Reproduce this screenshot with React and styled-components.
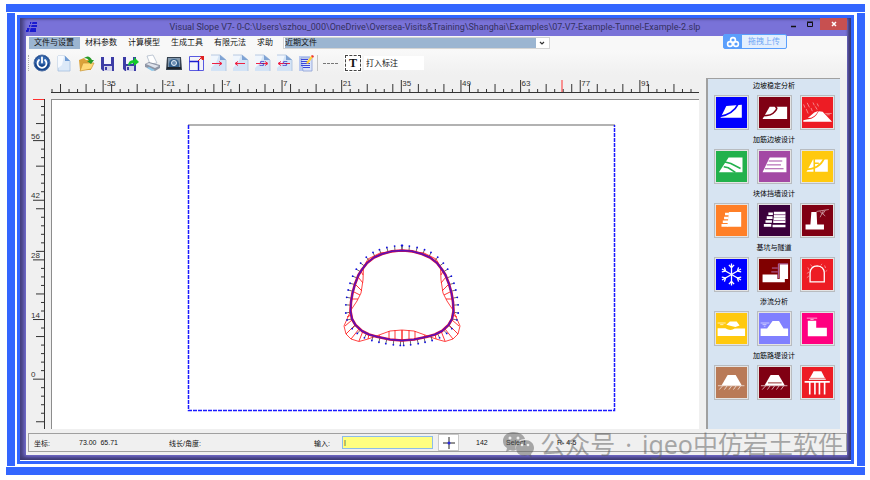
import React from "react";
import styled, { createGlobalStyle } from "styled-components";

const GlobalStyle = createGlobalStyle`
  * {
    box-sizing: border-box;
  }

  body {
    margin: 0;
    background: #fff;
    font-family: "Liberation Sans", "Noto Sans CJK SC", sans-serif;
    font-size: 8px;
    color: #111;
  }

  button, input, select {
    font: inherit;
    color: inherit;
    padding: 0;
    margin: 0;
    border: 0;
    background: none;
  }

  svg {
    display: block;
  }
`;

const menus = ["文件与设置", "材料参数", "计算模型", "生成工具", "有限元法", "求助"];

const Sheet = ({ children }) => (
  <>
    <path d="M2 1h9l6 5v11H2z" fill="#d3e3f6" />
    <path d="M2 1h8l-3 8-5 5z" fill="#f0f6fd" />
    <path d="M2 1h9l6 5v11" fill="none" stroke="#a9bfdc" strokeWidth=".8" />
    <path d="M11 1v5h6z" fill="#7fa3d4" />
    {children}
  </>
);

const Disk = () => (
  <>
    <path d="M2 3h13v14H4l-2-2z" fill="#3c3ca6" />
    <path d="M5 3h7v7H5z" fill="#f4f4fc" />
    <path d="M5 12h8v5H5z" fill="#d4d4ea" />
    <path d="M6 13h2v3H6z" fill="#3c3ca6" />
  </>
);

const tools = [
  {
    label: "退出",
    icon: (
      <>
        <circle cx="9" cy="9" r="8" fill="#16458c" stroke="#4d6fa5" />
        <path d="M2 9a7 7 0 0 1 14 0q-7 3-14 0" fill="#4c80c6" opacity=".6" />
        <path d="M6 6a4.500 4.500 0 1 0 6 0M9 3.500v5" fill="none" stroke="#fff" strokeWidth="1.800" strokeLinecap="round" />
      </>
    ),
  },
  {
    label: "新建",
    icon: (
      <>
        <path d="M3 2h7l5 5v10H3z" fill="#dce9f8" stroke="#a5bfe0" strokeWidth=".8" />
        <path d="M3 2h6l-2 9-4 3z" fill="#f6faff" />
        <path d="M10 2v5h5z" fill="#6f9bd4" />
      </>
    ),
  },
  {
    label: "打开",
    icon: (
      <>
        <path d="M2 6l5-2 2 2h5v10H3z" fill="#dba23a" />
        <path d="M3 17l3-8h11l-3 6z" fill="#ffd978" stroke="#c99431" strokeWidth=".7" />
        <path d="M7 4q5-4 8 2h2l-3 4-4-3h2q-1-3-5-3" fill="#279a27" />
      </>
    ),
  },
  { label: "保存", icon: <Disk /> },
  {
    label: "另存为",
    icon: (
      <>
        <Disk />
        <path d="M7 12q0-6 6-6V3l5 5-5 4V9q-3 0-6 3" fill="#12c92a" />
      </>
    ),
  },
  {
    label: "打印",
    icon: (
      <>
        <path d="M4 2l6-1 4 8-7 1z" fill="#fff" stroke="#a5b2c4" strokeWidth=".7" />
        <path d="M2 10l4-2 11 3v3l-5 3-10-4z" fill="#8e95a5" />
        <path d="M3 10l3-1 10 3-4 2z" fill="#dfe3ec" />
        <path d="M6 13l6 3-3 1-5-3z" fill="#8cc7ea" />
      </>
    ),
  },
  {
    label: "截图",
    icon: (
      <>
        <path d="M2 3h14l1 13H1z" fill="#36424f" />
        <path d="M3 4h12v9H3z" fill="#8298ae" />
        <path d="M4 13q-1-8 5-8t5 8z" fill="#35618d" />
        <circle cx="9" cy="9" r="2.500" fill="#6d8fb4" stroke="#e4eef8" />
        <path d="M2 14h14" stroke="#1d242c" strokeWidth="2" />
      </>
    ),
  },
  {
    label: "缩放",
    icon: (
      <>
        <path d="M2.500 2.500h14v14h-14z" fill="#f4f4f8" stroke="#5a5ae0" />
        <path d="M2.500 7.500h9v9" fill="none" stroke="#1c1cd0" strokeWidth="1.400" />
        <path d="M11 7l4-4" stroke="#e02020" />
        <path d="M13 2h4v4h-2z" fill="#e02020" />
      </>
    ),
  },
  { label: "导入", icon: <Sheet><path d="M3 9.500h10M10 7.500l3 2-3 2" fill="none" stroke="#ee2244" /></Sheet> },
  { label: "导出", icon: <Sheet><path d="M14 9.500H4M7 7.500l-3 2 3 2" fill="none" stroke="#ee2244" /></Sheet> },
  {
    label: "导入S",
    icon: (
      <Sheet>
        <path d="M3 9.500h11M12 7.500l3 2-3 2" fill="none" stroke="#ee2244" />
        <text x="6" y="12" fontSize="8" fontStyle="italic" fill="#2424c8">S</text>
      </Sheet>
    ),
  },
  {
    label: "导出S",
    icon: (
      <Sheet>
        <path d="M15 9.500H3M6 7.500l-3 2 3 2" fill="none" stroke="#ee2244" />
        <text x="7" y="12" fontSize="8" fontStyle="italic" fill="#2424c8">S</text>
      </Sheet>
    ),
  },
  {
    label: "报告",
    icon: (
      <>
        <path d="M2 2h11v15H2z" fill="#b9c9f0" />
        <path d="M4 4h11v13H6z" fill="#dbe5fa" stroke="#8b9fd6" strokeWidth=".8" />
        <path d="M4 5.500h7M4 7.500h7M4 9.500h9M4 11.500h9M6 13.500h7" stroke="#3a48dc" />
        <path d="M9 9l5-7 2 1-5 7z" fill="#ffcf3c" />
        <path d="M14 2l1-1 2 1-1 2z" fill="#e33" />
      </>
    ),
  },
];

const Slope = "M14 64 32 28 80 24V64z";

// every module icon is drawn on a 96 unit square
const groups = [
  {
    title: "边坡稳定分析",
    items: [
      {
        color: "#0000ff",
        icon: (
          <>
            <path d={Slope} fill="#fff" />
            <path d="M8 61Q52 56 70 20" fill="none" stroke="#0000ff" strokeWidth="5" />
          </>
        ),
      },
      {
        color: "#800013",
        icon: (
          <>
            <path d="M11 68 33 30H87V68z" fill="#fff" />
            <path d="M10 58Q40 58 48 46 55 40 55 35L50 27" fill="none" stroke="#800013" strokeWidth="5" />
          </>
        ),
      },
      {
        color: "#ed1c24",
        icon: (
          <>
            <path d="M4 77V72L18 69Q38 70 52 44L64 46 93 77zM18 65 38 48 50 43Q40 65 18 65" fill="#fff" />
            <path d="M5 23l4 10M13 37l6 14M16 18l7 14M28 34l4 10M34 17l4 9M41 29l6 10M47 20l4 9M72 51h20M76 55h10" stroke="#fff" strokeWidth="2" opacity=".7" />
          </>
        ),
      },
    ],
  },
  {
    title: "加筋边坡设计",
    items: [
      {
        color: "#22b14c",
        icon: (
          <>
            <path d="M9 66 39 20H82V66z" fill="#fff" />
            <path d="M28 34 46 39 76 54M24 49 38 52 60 66" fill="none" stroke="#22b14c" strokeWidth="5" />
          </>
        ),
      },
      {
        color: "#a349a4",
        icon: (
          <>
            <path d="M11 66 33 20H85V66z" fill="#fff" />
            <path d="M30 31H72M24 43H68M18 55H76" stroke="#a349a4" strokeWidth="3" />
          </>
        ),
      },
      {
        color: "#ffc90e",
        icon: (
          <>
            <path d="M14 64 34 26H80V64z" fill="#fff" />
            <path d="M10 57Q55 56 69 22M38 23V66M38 38H52" fill="none" stroke="#ffc90e" strokeWidth="5" />
          </>
        ),
      },
    ],
  },
  {
    title: "块体挡墙设计",
    items: [
      {
        color: "#ff7f27",
        icon: (
          <>
            <path d="M40 22H78V67H35z" fill="#fff" />
            <path d="M28 28H40M25 40H39M21 52H38M17 63H37" stroke="#fff" strokeWidth="8" />
          </>
        ),
      },
      {
        color: "#3b003b",
        icon: (
          <>
            <path d="M29 27H43M24 39H42M20 51H40M15 63H38M46 25H82M46 34H82M45 43H82M44 52H82M42 65H82" stroke="#fff" strokeWidth="8" />
            <path d="M48 30H82M46 48H82" stroke="#a87aa8" strokeWidth="3" />
          </>
        ),
      },
      {
        color: "#800013",
        icon: (
          <>
            <path d="M29 22H45L47 60H68V76H11V60H26z" fill="#fff" />
            <path d="M45 20 83 14M55 20 72 34M66 18 56 38M72 17 64 28" stroke="#fff" strokeWidth="2" opacity=".8" />
          </>
        ),
      },
    ],
  },
  {
    title: "基坑与隧道",
    items: [
      {
        color: "#0000ff",
        icon: [0, 60, 120, 180, 240, 300].map((a) => (
          <path
            key={a}
            d="M48 48V14M40 18 48 27 56 18"
            transform={`rotate(${a} 48 48)`}
            fill="none"
            stroke="#fff"
            strokeWidth="4"
          />
        )),
      },
      {
        color: "#800000",
        icon: (
          <>
            <path d="M11 48H57V62H64V16H90V62H80V72H11z" fill="#fff" />
            <path d="M60 15V60M60 15H90M40 28H58M38 40H58" fill="none" stroke="#b06ab0" strokeWidth="3" />
          </>
        ),
      },
      {
        color: "#ed1c24",
        icon: (
          <>
            <path d="M25 71V42Q27 22 47 21 68 23 69 42V71z" fill="none" stroke="#fff" strokeWidth="4" />
            <path d="M26 17 32 24M18 26 22 34M15 45 22 40M15 58 22 52M62 15 58 20M70 20 73 28M78 35 73 39" stroke="#fff" strokeWidth="2" opacity=".7" />
          </>
        ),
      },
    ],
  },
  {
    title: "渗流分析",
    items: [
      {
        color: "#ffc90e",
        icon: (
          <>
            <path d="M5 47H29Q45 57 58 48H90V71H5z" fill="#fff" />
            <path d="M32 36 43 26H64L73 39 60 43Q48 40 32 36" fill="#fff" />
            <path d="M5 31H30M13 36H23" stroke="#fff" strokeWidth="3" opacity=".7" />
          </>
        ),
      },
      {
        color: "#8080ff",
        icon: (
          <>
            <path d="M5 48H25L42 25H62L76 48H90V71H5z" fill="#fff" />
            <path d="M5 31H32M11 36H23M15 41H20" stroke="#fff" strokeWidth="3" opacity=".6" />
          </>
        ),
      },
      {
        color: "#ff0080",
        icon: (
          <>
            <path d="M18 24H44V46H77V72H18z" fill="#fff" />
            <path d="M15 16H47M26 20H36" stroke="#fff" strokeWidth="2" />
          </>
        ),
      },
    ],
  },
  {
    title: "加筋路堤设计",
    items: [
      {
        color: "#b97a57",
        icon: (
          <>
            <path d="M17 57 36 25H61L80 57z" fill="#fff" />
            <path d="M6 58H88M20 59 10 70M34 59 26 70M48 59 40 70M62 59 54 70M76 59 68 70" stroke="#fff" strokeWidth="2" />
          </>
        ),
      },
      {
        color: "#800013",
        icon: (
          <>
            <path d="M17 57 36 25H61L80 57z" fill="#fff" />
            <path d="M28 49H70" stroke="#c08080" strokeWidth="5" />
            <path d="M6 58H88M20 59 10 70M34 59 26 70M48 59 40 70M62 59 54 70M76 59 68 70" stroke="#fff" strokeWidth="2" />
          </>
        ),
      },
      {
        color: "#ed1c24",
        icon: (
          <>
            <path d="M21 40 36 13H60L74 40z" fill="#fff" />
            <path d="M24 36H72" stroke="#e79090" strokeWidth="5" />
            <path d="M8 46H86M24 46V85M40 46V85M54 46V85M70 46V85" stroke="#fff" strokeWidth="5" />
          </>
        ),
      },
    ],
  },
];

const STEP = 8.52;

const HRuler = () => (
  <RulerTop aria-hidden="true">
    {Array.from({ length: 77 }, (_, i) => {
      const x = i * STEP + 1;
      const label = i % 7 === 6 && i < 70;
      const mid = i % 3 === 1;
      return (
        <g key={i}>
          <line x1={x} x2={x} y1={label ? 2 : mid ? 6 : 11} y2="15" />
          {label && <text x={x + 1} y="8">{(i - 6) * 2 - 35}</text>}
        </g>
      );
    })}
    <line x1="0" x2="648" y1="14.500" y2="14.500" />
    <line x1="511" x2="511" y1="2" y2="14" stroke="#ff3030" />
  </RulerTop>
);

const VRuler = () => (
  <RulerLeft aria-hidden="true">
    {Array.from({ length: 39 }, (_, i) => {
      const y = i * STEP - 1;
      const label = i % 7 === 5;
      return (
        <g key={i}>
          <line x1={label ? 7 : i % 5 === 3 ? 10 : 15} x2="18" y1={y} y2={y} />
          {label && <text x="5" y={y - 2}>{(33 - i) * 2}</text>}
        </g>
      );
    })}
    <line x1="18.500" x2="18.500" y1="0" y2="331" />
    <line x1="7" x2="18" y1=".5" y2=".5" stroke="#ff3030" />
  </RulerLeft>
);

// right half of the lining, measured from the tunnel axis
const half = [
  [0, 250.5], [10, 251.3], [20, 254], [28, 257.5], [35, 263], [40, 269.5], [43.5, 275],
  [47, 284], [49.5, 293], [51, 302], [51.5, 311], [50, 319], [46.5, 325], [40, 331],
  [33, 334.5], [25, 336.7], [12, 339.5], [0, 340.5],
];
const envelope = [
  [0, 251], [22, 253], [34, 259], [38.5, 267], [39, 280], [41, 293], [45, 301], [51, 310],
  [58, 326], [56, 334], [51, 339], [43, 341.5], [34, 339], [23, 335], [12, 331], [0, 330],
];
const hatch = [
  [41, 271, 39, 275], [44, 277, 39, 283], [46, 285, 40, 291], [48, 292, 42, 295],
  [50, 299, 44, 299], [51, 315, 55, 317], [50, 320, 57, 326], [47, 325, 56, 334],
  [43, 329, 51, 339], [39, 331, 43, 341], [33, 334, 34, 339], [22, 337, 23, 335],
  [13, 339, 13, 331], [7, 340, 7, 330], [0, 340, 0, 330],
];

const both = (pts) => [...pts, ...pts.slice(1, -1).reverse().map(([x, y]) => [-x, y])];
const toPath = (pts) => "M" + pts.map((p) => p.join(" ")).join("L") + "z";

const pins = () => {
  const out = [];
  let left = 0;
  for (let i = 1; i < half.length; i++) {
    const [x1, y1] = half[i - 1];
    const [x2, y2] = half[i];
    const len = Math.hypot(x2 - x1, y2 - y1);
    const dx = (x2 - x1) / len;
    const dy = (y2 - y1) / len;
    let d = left;
    for (; d < len; d += 7) {
      out.push([x1 + dx * d, y1 + dy * d, dy, -dx]);
    }
    left = d - len;
  }
  return out;
};

const Tunnel = () => (
  <g transform="translate(350 -100)">
    <path d={toPath(both(envelope))} fill="none" stroke="#ff3030" strokeWidth=".9" />
    {[1, -1].map((side) => (
      <g key={side} transform={`scale(${side} 1)`}>
        {hatch.map(([a, b, c, d]) => (
          <line key={`${a}-${b}`} x1={a} y1={b} x2={c} y2={d} stroke="#ff2020" strokeWidth=".9" />
        ))}
        {pins().map(([x, y, nx, ny]) => (
          <g key={`${x}-${y}`}>
            <line x1={x} y1={y} x2={x + nx * 5} y2={y + ny * 5} stroke="#444" strokeWidth=".8" />
            <circle cx={x + nx * 5} cy={y + ny * 5} r=".9" fill="#1010e0" />
          </g>
        ))}
      </g>
    ))}
    <path d={toPath(both(half))} fill="none" stroke="#e0103c" strokeWidth="2.600" strokeLinejoin="round" />
    <path d={toPath(both(half))} fill="none" stroke="#5a10b8" strokeWidth="1.500" strokeLinejoin="round" />
  </g>
);

const App = () => (
  <Page>
    <GlobalStyle />
    <Band />
    <Sides>
      <InnerFrame>
        <Window>
          <TitleBar>
            <svg width="12" height="10" viewBox="0 0 12 10">
              <path d="M4 1H11M3 4H11M1 7H10M0 9H10" stroke="#1a1ad0" strokeWidth="2" />
              <path d="M6 0 3 10" stroke="#7a73d6" />
            </svg>
            <Title>
              Visual Slope V7- 0-C:\Users\szhou_000\OneDrive\Oversea-Visits&amp;Training\Shanghai\Examples\07-V7-Example-Tunnel-Example-2.slp
            </Title>
            <Controls>
              <WinButton aria-label="最小化">
                <svg width="17" height="12"><path d="M5 8.500h5" stroke="#111" strokeWidth="1.500" /></svg>
              </WinButton>
              <WinButton aria-label="最大化">
                <svg width="17" height="12"><path d="M4.500 4.500h5v4h-5zM4 4h6" fill="none" stroke="#111" /></svg>
              </WinButton>
              <WinButton $close aria-label="关闭">
                <svg width="27" height="12"><path d="M12 4l4 4M16 4l-4 4" stroke="#fff" strokeWidth="1.500" /></svg>
              </WinButton>
            </Controls>
            <Upload>
              <UploadIcon>
                <svg width="14" height="12" viewBox="0 0 14 12">
                  <g fill="none" stroke="#fff" strokeWidth="1.600">
                    <circle cx="7" cy="4" r="2.400" />
                    <circle cx="4" cy="8" r="2.400" />
                    <circle cx="10" cy="8" r="2.400" />
                  </g>
                </svg>
              </UploadIcon>
              <UploadText>拖拽上传</UploadText>
            </Upload>
          </TitleBar>

          <Body>
            <MenuBar>
              {menus.map((m, i) => (
                <MenuItem key={m} $active={i === 0}>{m}</MenuItem>
              ))}
              <SelectBox>
                <Recent aria-label="近期文件">
                  <option>近期文件</option>
                </Recent>
                <svg width="12" height="10"><path d="M4 4l2 2 2-2" fill="none" stroke="#333" strokeWidth="1.200" /></svg>
              </SelectBox>
            </MenuBar>

            <Toolbar>
              <Grip />
              {tools.map((t) => (
                <Tool key={t.label} aria-label={t.label}>
                  <svg width="18" height="18">{t.icon}</svg>
                </Tool>
              ))}
              <Divider />
              <Tool aria-label="虚线">
                <svg width="16" height="18"><path d="M0 9.500h16" stroke="#777" strokeDasharray="3 1" /></svg>
              </Tool>
              <TextTool aria-label="文字">T</TextTool>
              <Note aria-label="标注" defaultValue="打入标注" />
            </Toolbar>

            <Main>
              <Work>
                <HRuler />
                <VRuler />
                <Canvas>
                  <svg width="100%" viewBox="0 0 647 329">
                    <path d="M136 25H563" stroke="#999" strokeWidth="1.300" />
                    <path d="M136.500 25V310.500H562.500V25" fill="none" stroke="#1a1aff" strokeWidth="1.500" strokeDasharray="4 1" />
                    <Tunnel />
                  </svg>
                </Canvas>
              </Work>

              <SidePanel>
                {groups.map((g) => (
                  <section key={g.title}>
                    <GroupTitle>{g.title}</GroupTitle>
                    <GroupRow>
                      {g.items.map((item, i) => (
                        <Module key={i} $color={item.color} aria-label={`${g.title} ${i + 1}`}>
                          <svg width="31" height="31" viewBox="0 0 96 96">{item.icon}</svg>
                        </Module>
                      ))}
                    </GroupRow>
                  </section>
                ))}
              </SidePanel>
            </Main>

            <StatusBar>
              <span>坐标:</span>
              <span>73.00&nbsp; 65.71</span>
              <span>线长/角度:</span>
              <label htmlFor="command">输入:</label>
              <Command id="command" defaultValue="|" />
              <Cross aria-label="捕捉">
                <svg width="16" height="14">
                  <path d="M2 7h12M8 1v12" stroke="#222" />
                  <circle cx="8" cy="7" r="1.500" fill="#2a2ae0" />
                </svg>
              </Cross>
              <span>142</span>
              <span>Select</span>
              <span>R- 4-5</span>
            </StatusBar>
          </Body>

          <Watermark>
            <svg width="32" height="28" viewBox="0 0 32 28">
              <path d="M12 1C5 1 1 5 1 10c0 3 1 5 4 7l-1 4 4-2c2 1 4 1 6 0-2-7 4-11 9-11-1-4-6-7-11-7z" fill="currentColor" />
              <path d="M23 9c-5 0-9 3-9 8s4 8 9 8l3-1 4 3-1-4c2-2 3-4 3-6 0-5-4-8-9-8z" fill="currentColor" />
              <g fill="#eee">
                <circle cx="8" cy="7" r="1.500" />
                <circle cx="16" cy="7" r="1.500" />
                <circle cx="20" cy="14" r="1.300" />
                <circle cx="26" cy="14" r="1.300" />
              </g>
            </svg>
            <span>公众号</span>
            <Dot>·</Dot>
            <span>igeo中仿岩土软件</span>
          </Watermark>
        </Window>
      </InnerFrame>
    </Sides>
    <Band />
  </Page>
);

const Page = styled.div`
  padding: 4px 5px 5px 6px;
`;

const Band = styled.div`
  height: 8px;
  background: #3366ff;
`;

const Sides = styled.div`
  margin: 1px 0 1px 1px;
  padding: 2px 3px 2px 2px;
  border: solid #3366ff;
  border-width: 0 8px;
`;

const InnerFrame = styled.div`
  border: 3px solid #3366ff;
  padding-bottom: 1px;
`;

const Window = styled.div`
  position: relative;
  padding: 0 4px 5px 6px;
  background: #7972d8;
  box-shadow: inset 0 -3px 4px #3d3970, inset 4px 0 4px #4a4585, inset -3px 0 3px #3d3970;
`;

const TitleBar = styled.header`
  position: relative;
  display: flex;
  align-items: center;
  height: 18px;
`;

const Title = styled.h1`
  flex: 1;
  margin: 0;
  padding-left: 46px;
  font: 9px/18px Roboto, sans-serif;
  color: #33305e;
  text-align: center;
  white-space: nowrap;
`;

const Controls = styled.div`
  display: flex;
  align-self: flex-start;
`;

const WinButton = styled.button`
  width: ${(p) => (p.$close ? "27px" : "17px")};
  height: 12px;
  background: ${(p) => (p.$close ? "#c75050" : "transparent")};
`;

const Upload = styled.button`
  position: absolute;
  right: 60px;
  top: 16px;
  z-index: 1;
  display: flex;
  width: 64px;
  height: 15px;
  border: 1px solid #5b9ffc;
  border-radius: 2px;
  background: #e3effe;
  color: #6ea6f5;
`;

const UploadIcon = styled.span`
  display: grid;
  place-items: center;
  width: 18px;
  height: 13px;
  background: #5b9ffc;
`;

const UploadText = styled.span`
  flex: 1;
  line-height: 13px;
  text-align: center;
`;

const Body = styled.main`
  background: #f0f0f0;
  padding-bottom: 3px;
`;

const MenuBar = styled.nav`
  display: flex;
  align-items: center;
  height: 14px;
  padding-left: 3px;
  background: #f8f8f8;
`;

const MenuItem = styled.button`
  height: 12px;
  line-height: 12px;
  padding: 0 6px 0 5px;
  background: ${(p) => (p.$active ? "#9bb5d1" : "transparent")};
`;

const SelectBox = styled.div`
  display: flex;
  align-items: center;
  width: 267px;
  height: 12px;
  margin-left: 4px;
  padding: 1px;
  border: 1px solid #d4d4d4;
  background: #fff;
`;

const Recent = styled.select`
  appearance: none;
  flex: 1;
  height: 10px;
  line-height: 10px;
  background: #9bb5d1;
`;

const Toolbar = styled.div`
  display: flex;
  align-items: center;
  height: 25px;
  padding-left: 2px;
  background: linear-gradient(#f9f9f9, #f0f0f0);
`;

const Grip = styled.div`
  width: 3px;
  height: 16px;
  border-left: 1px dotted #aaa;
`;

const Tool = styled.button`
  display: grid;
  place-items: center;
  width: 22px;
  height: 20px;
`;

const Divider = styled.div`
  width: 1px;
  height: 16px;
  margin-right: 2px;
  background: #c4c4c4;
`;

const TextTool = styled.button`
  width: 18px;
  height: 18px;
  margin: 0 2px;
  border: 2px solid #fff;
  outline: 1px dashed #444;
  outline-offset: -2px;
  background: #fff;
  font: bold 12px/14px "Liberation Serif", serif;
`;

const Note = styled.input`
  width: 60px;
  height: 14px;
  padding-left: 2px;
  background: #fff;
`;

const Main = styled.div`
  display: flex;
  gap: 7px;
  padding: 3px 7px 4px 0;
`;

const Work = styled.div`
  flex: 1;
  display: grid;
  grid-template-columns: 25px 1fr;
  grid-template-rows: 21px 1fr;
`;

const Ruler = styled.svg`
  overflow: hidden;
  stroke: #333;
  stroke-width: 1;

  text {
    stroke: none;
    fill: #333;
  }
`;

const RulerTop = styled(Ruler)`
  grid-column: 2;
  width: 100%;
  height: 21px;
`;

const RulerLeft = styled(Ruler)`
  width: 25px;
  height: 100%;
`;

const Canvas = styled.div`
  border-top: 1px solid #8c8c8c;
  border-left: 1px solid #8c8c8c;
  background: #fff;
`;

const SidePanel = styled.aside`
  width: 134px;
  padding-top: 2px;
  border-top: 1px solid #a0a0a0;
  border-left: 2px solid #a0a0a0;
  background: #d7e4f2;
`;

const GroupTitle = styled.h2`
  margin: 0 0 4px;
  font-size: 7px;
  font-weight: normal;
  line-height: 10px;
  text-align: center;
  color: #000;
`;

const GroupRow = styled.div`
  display: flex;
  justify-content: center;
  gap: 8px;
  margin-bottom: 5px;
`;

const Module = styled.button`
  width: 35px;
  height: 35px;
  padding: 1px;
  border: 1px solid #b8bcc0;
  background: ${(p) => p.$color};
  background-clip: content-box;
  box-shadow: inset 0 0 0 1px #e4e4e4;
`;

const StatusBar = styled.footer`
  display: grid;
  grid-template-columns: 45px 90px 145px 28px 91px 43px 30px 51px 1fr;
  align-items: center;
  height: 19px;
  margin-left: 2px;
  padding-left: 5px;
  border: 1px solid #a0a0a0;
  font-size: 7px;
`;

const Command = styled.input`
  height: 13px;
  padding-left: 1px;
  border: 1px solid #8cbcea;
  background: #ffff80;
  color: #222;
`;

const Cross = styled.button`
  display: grid;
  place-items: center;
  width: 21px;
  height: 17px;
  margin-left: 5px;
  border: 1px solid #c8c8c8;
  background: #fff;
`;

const Watermark = styled.div`
  position: absolute;
  right: 8px;
  bottom: 1px;
  display: flex;
  align-items: center;
  gap: 6px;
  font: 25px/29px "Noto Sans", "Noto Sans CJK SC", sans-serif;
  color: rgba(90, 90, 90, 0.5);
  white-space: nowrap;
  pointer-events: none;
`;

const Dot = styled.span`
  margin: 0 4px;
`;

export default App;
